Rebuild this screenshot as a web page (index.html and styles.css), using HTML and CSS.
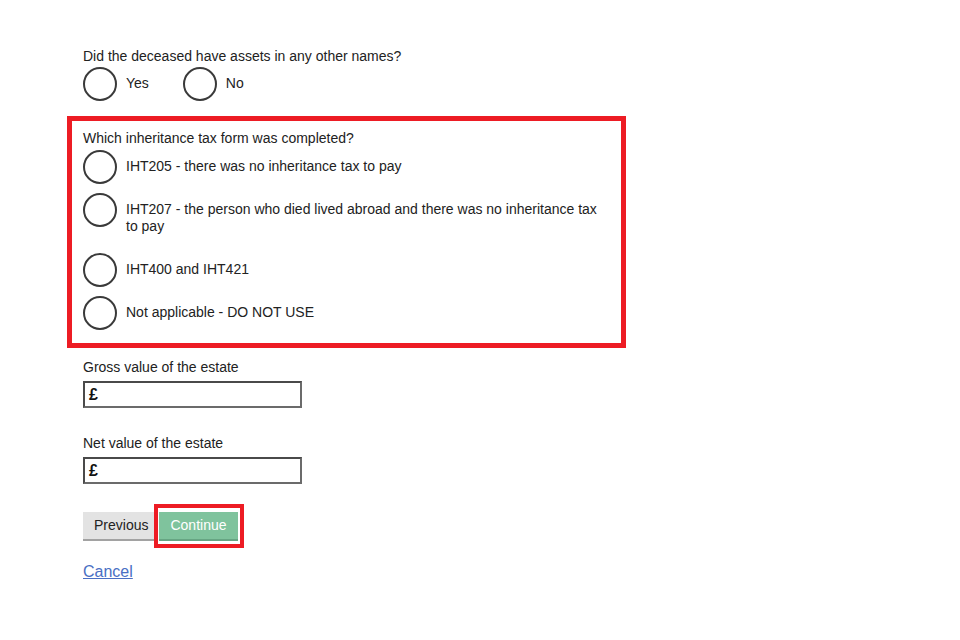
FILE: index.html
```html
<!DOCTYPE html>
<html lang="en">
<head>
<meta charset="utf-8">
<title>Inheritance tax</title>
<link rel="stylesheet" href="styles.css">
</head>
<body>
<main class="page">
  <div class="question">
    <div class="q-label">Did the deceased have assets in any other names?</div>
    <div class="radios-inline">
      <label class="radio-item"><input type="radio" name="other"><span class="r-text">Yes</span></label>
      <label class="radio-item"><input type="radio" name="other"><span class="r-text">No</span></label>
    </div>
  </div>

  <div class="highlight-box">
    <div class="q-label">Which inheritance tax form was completed?</div>
    <div class="radios-stack">
      <label class="radio-item"><input type="radio" name="form"><span class="r-text">IHT205 - there was no inheritance tax to pay</span></label>
      <label class="radio-item"><input type="radio" name="form"><span class="r-text">IHT207 - the person who died lived abroad and there was no inheritance tax to pay</span></label>
      <label class="radio-item"><input type="radio" name="form"><span class="r-text">IHT400 and IHT421</span></label>
      <label class="radio-item"><input type="radio" name="form"><span class="r-text">Not applicable - DO NOT USE</span></label>
    </div>
  </div>

  <div class="field first">
    <div class="f-label">Gross value of the estate</div>
    <div class="money-input"><span class="pound">£</span></div>
  </div>

  <div class="field">
    <div class="f-label">Net value of the estate</div>
    <div class="money-input"><span class="pound">£</span></div>
  </div>

  <div class="actions">
    <button class="btn btn-prev" type="button">Previous</button>
    <button class="btn btn-continue" type="button">Continue</button>
  </div>

  <a class="cancel" href="#">Cancel</a>
</main>
</body>
</html>
```

FILE: styles.css
```css
html, body {
  margin: 0;
  padding: 0;
  background: #ffffff;
}

body {
  font-family: "Liberation Sans", Arial, sans-serif;
  font-size: 14px;
  line-height: 17px;
  color: #222222;
}

.page {
  padding: 48px 0 0 83px;
  width: 560px;
}

.q-label {
  margin-bottom: 2px;
}

.radios-inline {
  display: flex;
  gap: 34px;
}

.radios-stack {
  display: flex;
  flex-direction: column;
  gap: 9px;
}

.radio-item {
  display: flex;
  align-items: flex-start;
}

.radio-item input {
  appearance: none;
  -webkit-appearance: none;
  margin: 0;
  flex: 0 0 auto;
  width: 34px;
  height: 34px;
  border: 2px solid #3a3a3a;
  border-radius: 50%;
  box-sizing: border-box;
  background: #ffffff;
}

.r-text {
  padding: 8px 0 9px 9px;
  max-width: 482px;
}

.highlight-box {
  margin: 15px 0 0 -16px;
  width: 538px;
  border: 5px solid #ed1c24;
  padding: 9px 0 13px 11px;
}

.highlight-box .q-label {
  margin-bottom: 3px;
}

.field.first {
  margin-top: 11px;
}

.field {
  margin-top: 27px;
}

.f-label {
  margin-bottom: 5px;
}

.money-input {
  width: 219px;
  height: 27px;
  box-sizing: border-box;
  border: 2px solid #4a4a4a;
  border-right-color: #6b6b6b;
  border-bottom-color: #6b6b6b;
  padding: 3px 0 0 4px;
}

.pound {
  font-weight: bold;
  font-size: 16px;
  color: #111111;
}

.actions {
  display: flex;
  gap: 4px;
  margin-top: 28px;
}

.btn {
  font-family: "Liberation Sans", Arial, sans-serif;
  font-size: 14px;
  line-height: 17px;
  height: 29px;
  border: 0;
  border-bottom: 2px solid #a2a2a2;
  padding: 5px 11px 5px;
  box-sizing: border-box;
  margin: 0;
}

.btn-prev {
  background: #e3e3e3;
  color: #222222;
  width: 72px;
}

.btn-continue {
  position: relative;
  background: #7fc39d;
  border-bottom-color: #66a583;
  color: #ffffff;
  width: 79px;
}

.btn-continue::after {
  content: "";
  position: absolute;
  left: -5px;
  top: -8px;
  right: -6px;
  bottom: -9px;
  border: 4px solid #ed1c24;
}

.cancel {
  display: inline-block;
  margin-top: 22px;
  font-size: 16px;
  line-height: 18px;
  color: #4a6fc4;
  text-decoration: underline;
}
```
